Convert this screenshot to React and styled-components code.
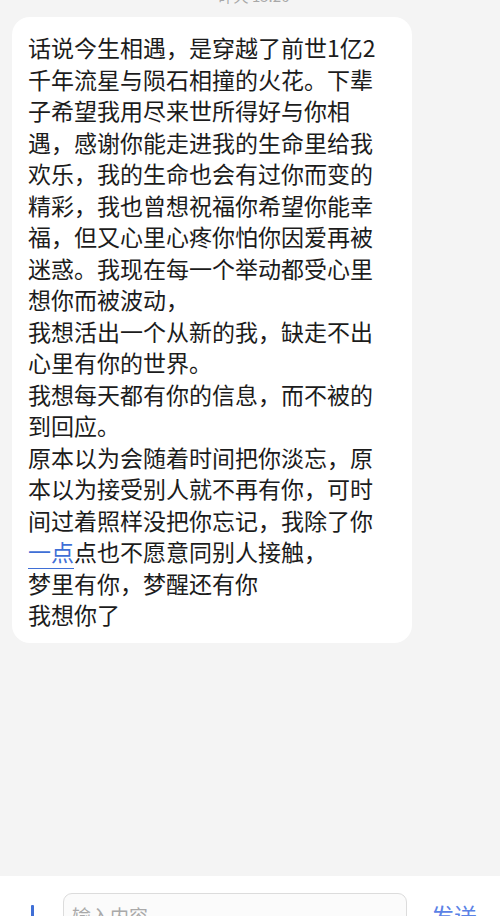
import React from 'react';
import styled, {createGlobalStyle} from 'styled-components';

const GlobalStyle = createGlobalStyle`
  html, body {
    margin: 0;
    padding: 0;
    background: #f4f4f4;
    overflow: hidden;
  }
  body {
    font-family: "Noto Sans CJK SC", "Noto Sans", sans-serif;
  }
`;

const Screen = styled.div`
  display: flex;
  flex-direction: column;
  width: 500px;
  height: 916px;
  overflow: hidden;
  background: #f4f4f4;
`;

const ChatArea = styled.div`
  flex: 1;
  display: flex;
  flex-direction: column;
  align-items: flex-start;
  padding: 0 12px;
  overflow: hidden;
`;

const TimeStamp = styled.div`
  align-self: center;
  height: 20px;
  margin-top: -14px;
  margin-left: 8px;
  font-size: 15px;
  line-height: 20px;
  color: #a8a8a8;
`;

const Bubble = styled.div`
  box-sizing: border-box;
  width: 400px;
  margin-top: 11px;
  padding: 15px 20px 12px 16px;
  background: #ffffff;
  border-radius: 18px;
  font-size: 23px;
  color: #1c1c1c;
`;

const Line = styled.div`
  height: 31.5px;
  line-height: 31.5px;
  white-space: nowrap;
`;

const InlineLink = styled.span`
  color: #3f6fd6;
  border-bottom: 1.5px solid #3f6fd6;
`;

const InputBar = styled.div`
  flex: 0 0 40px;
  display: flex;
  align-items: flex-start;
  padding-top: 17px;
  box-sizing: border-box;
  background: #ffffff;
  overflow: hidden;
`;

const Cursor = styled.div`
  width: 3px;
  height: 22px;
  margin: 12px 29px 0 31px;
  background: #3f6fd6;
  border-radius: 1px;
`;

const InputBox = styled.div`
  box-sizing: border-box;
  width: 344px;
  height: 44px;
  padding: 10px 8px;
  border: 1px solid #dcdcdc;
  border-radius: 9px;
  background: #fbfbfb;
  font-size: 19px;
  line-height: 24px;
  color: #a9a9a9;
`;

const SendButton = styled.div`
  margin: 7px 0 0 24px;
  font-size: 23px;
  line-height: 30px;
  color: #5b82e6;
`;

const lines = [
  '话说今生相遇，是穿越了前世1亿2',
  '千年流星与陨石相撞的火花。下辈',
  '子希望我用尽来世所得好与你相',
  '遇，感谢你能走进我的生命里给我',
  '欢乐，我的生命也会有过你而变的',
  '精彩，我也曾想祝福你希望你能幸',
  '福，但又心里心疼你怕你因爱再被',
  '迷惑。我现在每一个举动都受心里',
  '想你而被波动，',
  '我想活出一个从新的我，缺走不出',
  '心里有你的世界。',
  '我想每天都有你的信息，而不被的',
  '到回应。',
  '原本以为会随着时间把你淡忘，原',
  '本以为接受别人就不再有你，可时',
  '间过着照样没把你忘记，我除了你',
  null,
  '梦里有你，梦醒还有你',
  '我想你了',
];

const App = () => (
  <Screen>
    <GlobalStyle />
    <ChatArea>
      <TimeStamp>昨天 15:26</TimeStamp>
      <Bubble>
        {lines.map((text, i) => (
          text === null ? (
            <Line key={i}>
              <InlineLink>一点</InlineLink>点也不愿意同别人接触，
            </Line>
          ) : (
            <Line key={i}>{text}</Line>
          )
        ))}
      </Bubble>
    </ChatArea>
    <InputBar>
      <Cursor />
      <InputBox>输入内容</InputBox>
      <SendButton>发送</SendButton>
    </InputBar>
  </Screen>
);

export default App;
